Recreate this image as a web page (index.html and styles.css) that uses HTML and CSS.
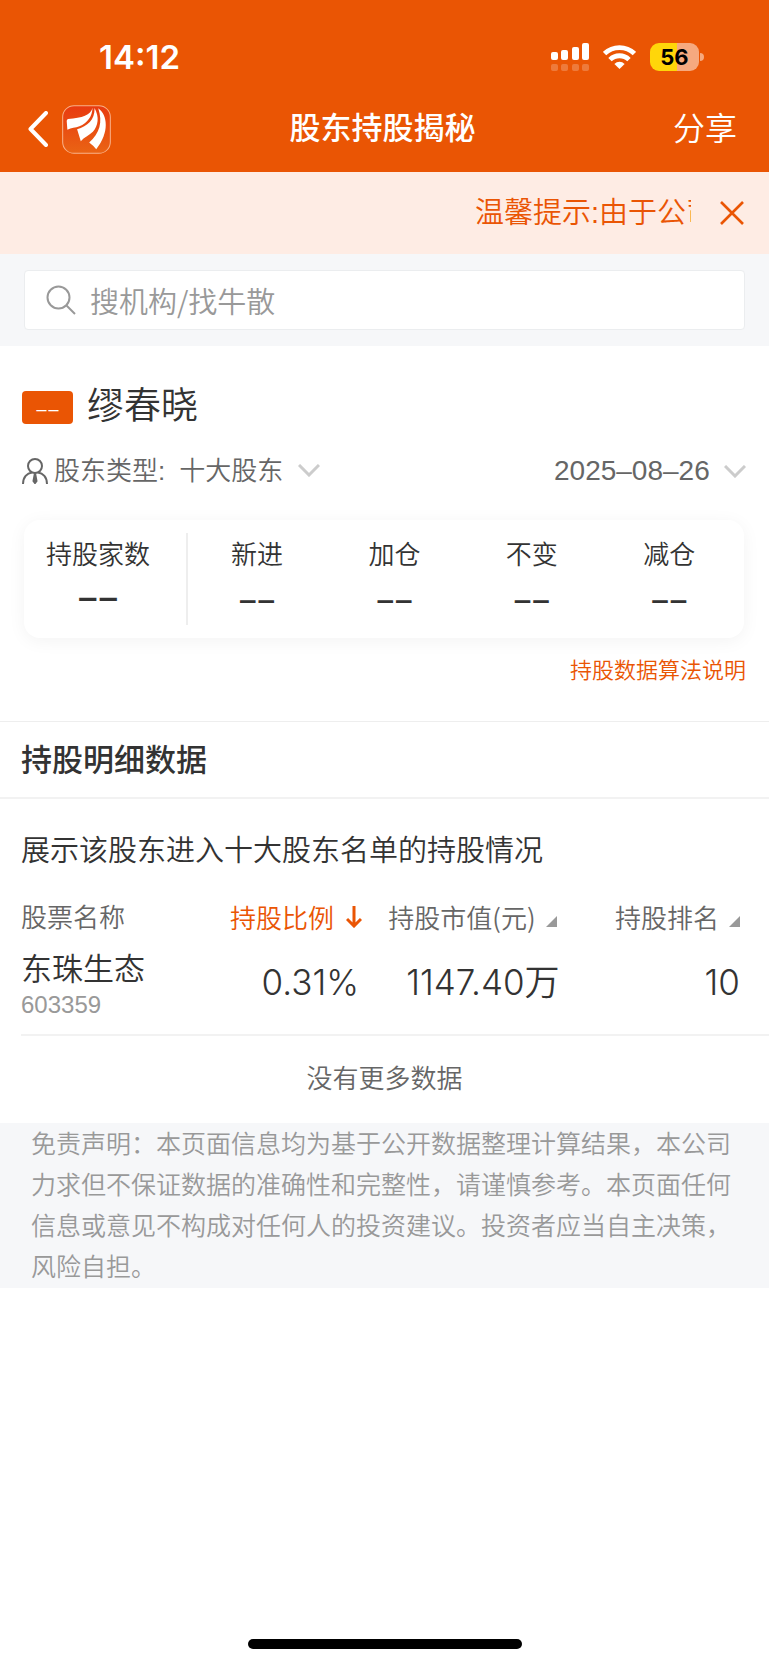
FILE: index.html
```html
<!DOCTYPE html>
<html lang="zh-CN">
<head>
  <meta charset="UTF-8">
  <meta name="viewport" content="width=device-width, initial-scale=1.0">
  <title>股东持股揭秘</title>
  <link rel="stylesheet" href="styles.css">
</head>
<body>

  <header class="top">
    <div class="status-bar">
      <span class="time">14:12</span>
      <div class="status-icons">
        <svg class="signal" width="38" height="28" viewBox="0 0 38 28" fill="#fff">
          <rect x="0" y="9" width="7" height="8" rx="2"/>
          <rect x="10" y="7" width="7" height="10" rx="2"/>
          <rect x="21" y="4" width="7" height="13" rx="2"/>
          <rect x="31" y="0" width="7" height="17" rx="2"/>
          <g opacity="0.22">
            <rect x="0" y="21" width="7" height="7" rx="2"/>
            <rect x="10" y="21" width="7" height="7" rx="2"/>
            <rect x="21" y="21" width="7" height="7" rx="2"/>
            <rect x="31" y="21" width="7" height="7" rx="2"/>
          </g>
        </svg>
        <svg class="wifi" width="33" height="24" viewBox="0 0 33 24">
          <g fill="none" stroke="#fff" stroke-width="4.8">
            <path d="M1.6 8.6 A21.5 21.5 0 0 1 31.4 8.6"/>
            <path d="M7 14.6 A13.6 13.6 0 0 1 26 14.6"/>
          </g>
          <path d="M11.4 18.9 A7.4 7.4 0 0 1 21.6 18.9 L16.5 24 Z" fill="#fff"/>
        </svg>
        <div class="battery"><span class="battery-level">56</span></div>
      </div>
    </div>

    <nav class="nav-bar">
      <div class="nav-left">
        <button class="icon-btn" type="button" aria-label="返回">
          <svg width="20" height="36" viewBox="0 0 20 36" fill="none" stroke="#fff" stroke-width="4" stroke-linecap="round" stroke-linejoin="round">
            <path d="M18 2 L2.5 18 L18 34"/>
          </svg>
        </button>
        <a class="logo" href="#" aria-label="首页">
          <svg width="49" height="49" viewBox="0 0 146 146">
            <defs>
              <linearGradient id="logoBg" x1="0" y1="0" x2="0" y2="1">
                <stop offset="0" stop-color="#e83a10"/>
                <stop offset="1" stop-color="#ea6414"/>
              </linearGradient>
            </defs>
            <rect x="2" y="2" width="142" height="142" rx="34" fill="url(#logoBg)" stroke="#f9b189" stroke-width="3"/>
            <g fill="#fff">
              <path d="M91 8 C86 30 60 38 18 42 Q14 43 14 48 L16 74 C28 66 40 68 52 63 C76 54 90 34 91 8 Z"/>
              <path d="M97 9 C98 44 76 64 45 72 Q50 88 56 108 C66 96 80 92 92 80 C108 62 112 36 97 9 Z"/>
              <path d="M108 10 C136 30 142 82 102 132 Q92 120 81 112 C112 84 122 52 108 10 Z"/>
            </g>
          </svg>
        </a>
      </div>
      <h1>股东持股揭秘</h1>
      <button class="share-btn" type="button">分享</button>
    </nav>
  </header>

  <div class="notice">
    <p class="notice-text">温馨提示:由于公司</p>
    <button class="icon-btn" type="button" aria-label="关闭">
      <svg width="24" height="24" viewBox="0 0 24 24" fill="none" stroke="#ea5504" stroke-width="2.6">
        <path d="M1 1 L23 23 M23 1 L1 23"/>
      </svg>
    </button>
  </div>

  <form class="search">
    <div class="search-box">
      <svg width="30" height="30" viewBox="0 0 30 30" fill="none" stroke="#999" stroke-width="2">
        <circle cx="12.5" cy="12.5" r="11"/>
        <path d="M20.5 20.5 L29 29"/>
      </svg>
      <input type="text" placeholder="搜机构/找牛散" aria-label="搜机构/找牛散">
    </div>
  </form>

  <main>
    <section class="holder">
      <div class="holder-name">
        <span class="badge">––</span>
        <h2>缪春晓</h2>
      </div>

      <div class="filters">
        <div class="filter">
          <svg class="person" width="26" height="26" viewBox="0 0 26 26" fill="none" stroke="#666" stroke-width="2">
            <circle cx="13" cy="8" r="7"/>
            <path d="M1 26 C1 19 5 15 10 14.5 M25 26 C25 19 21 15 16 14.5"/>
            <path d="M13 15 L14.5 23 L13 25 L11.5 23 Z" fill="#666"/>
          </svg>
          <label for="holderType">股东类型:</label>
          <select id="holderType">
            <option>十大股东</option>
          </select>
          <svg class="chevron" width="22" height="13" viewBox="0 0 22 13" fill="none" stroke="#ccc" stroke-width="3">
            <path d="M1 1 L11 11 L21 1"/>
          </svg>
        </div>
        <div class="filter">
          <select id="reportDate" aria-label="报告日期">
            <option>2025–08–26</option>
          </select>
          <svg class="chevron" width="22" height="13" viewBox="0 0 22 13" fill="none" stroke="#ccc" stroke-width="3">
            <path d="M1 1 L11 11 L21 1"/>
          </svg>
        </div>
      </div>

      <dl class="stats">
        <div class="stat total">
          <dt>持股家数</dt>
          <dd>––</dd>
        </div>
        <div class="stat">
          <dt>新进</dt>
          <dd>––</dd>
        </div>
        <div class="stat">
          <dt>加仓</dt>
          <dd>––</dd>
        </div>
        <div class="stat">
          <dt>不变</dt>
          <dd>––</dd>
        </div>
        <div class="stat">
          <dt>减仓</dt>
          <dd>––</dd>
        </div>
      </dl>

      <a class="explain" href="#">持股数据算法说明</a>
    </section>

    <section class="detail">
      <h3>持股明细数据</h3>
      <p class="detail-desc">展示该股东进入十大股东名单的持股情况</p>

      <table>
        <thead>
          <tr>
            <th class="col-name">股票名称</th>
            <th class="col-ratio">
              <button class="sort active" type="button">持股比例
                <svg width="16" height="22" viewBox="0 0 16 22" fill="none" stroke="#ea5504" stroke-width="3">
                  <path d="M8 0 V20 M1 13 L8 20 L15 13"/>
                </svg>
              </button>
            </th>
            <th class="col-value">
              <button class="sort" type="button">持股市值(元)
                <svg class="corner" width="11" height="11" viewBox="0 0 11 11" fill="#999"><path d="M11 0 V11 H0 Z"/></svg>
              </button>
            </th>
            <th class="col-rank">
              <button class="sort" type="button">持股排名
                <svg class="corner" width="11" height="11" viewBox="0 0 11 11" fill="#999"><path d="M11 0 V11 H0 Z"/></svg>
              </button>
            </th>
          </tr>
        </thead>
        <tbody>
          <tr>
            <td class="col-name">
              <a href="#">东珠生态</a>
              <span class="code">603359</span>
            </td>
            <td class="col-ratio">0.31%</td>
            <td class="col-value">1147.40万</td>
            <td class="col-rank">10</td>
          </tr>
        </tbody>
      </table>

      <p class="no-more">没有更多数据</p>
    </section>

    <p class="disclaimer">免责声明：本页面信息均为基于公开数据整理计算结果，本公司力求但不保证数据的准确性和完整性，请谨慎参考。本页面任何信息或意见不构成对任何人的投资建议。投资者应当自主决策，风险自担。</p>
  </main>

  <div class="home-indicator"></div>

</body>
</html>
```
FILE: styles.css
```css
/* Reset */
body, h1, h2, h3, p, dl, dd, button, input, select {
    margin: 0;
    padding: 0;
}

* {
    box-sizing: border-box;
}

body {
    display: flex;
    flex-direction: column;
    min-height: 100vh;
    background-color: #ffffff;
    color: #333333;
    font-family: "Liberation Sans", "Noto Sans CJK SC", sans-serif;
    font-size: 26px;
    font-weight: 350;
    line-height: 1.4;
    overflow-x: hidden;
}

button, input, select {
    border: none;
    background: none;
    font: inherit;
    color: inherit;
}

button {
    cursor: pointer;
}

a {
    color: inherit;
    text-decoration: none;
}

svg {
    display: block;
    flex-shrink: 0;
}

/* Header */
.top {
    background-color: #ea5504;
    color: #ffffff;
}

.status-bar {
    display: flex;
    justify-content: space-between;
    align-items: center;
    height: 86px;
    padding: 28px 65px 0 99px;
}

.time {
    font-family: Inter, sans-serif;
    font-size: 33px;
    font-weight: 600;
}

.status-icons {
    display: flex;
    align-items: center;
    gap: 14px;
}

.battery {
    position: relative;
    width: 49px;
    height: 28px;
    margin-right: 5px;
    border-radius: 9px;
    background: linear-gradient(to right, #ffd60a 56%, #f6a97f 56%);
    color: #000000;
    text-align: center;
}

.battery::after {
    content: "";
    position: absolute;
    left: 50px;
    top: 10px;
    width: 4px;
    height: 8px;
    border-radius: 0 4px 4px 0;
    background-color: #f6a97f;
}

.battery-level {
    display: block;
    font-family: Inter, sans-serif;
    font-size: 22px;
    font-weight: 700;
    line-height: 28px;
}

.nav-bar {
    display: grid;
    grid-template-columns: 1fr auto 1fr;
    align-items: center;
    height: 86px;
    padding: 0 32px 0 28px;
}

.nav-left {
    display: flex;
    align-items: center;
    gap: 14px;
}

.nav-bar h1 {
    font-size: 31px;
    font-weight: 500;
}

.share-btn {
    justify-self: end;
    font-size: 32px;
}

/* Notice */
.notice {
    display: flex;
    justify-content: flex-end;
    align-items: center;
    gap: 29px;
    height: 82px;
    padding: 0 25px;
    background-color: #feece4;
    color: #ea5504;
}

.notice-text {
    width: 216px;
    overflow: hidden;
    white-space: nowrap;
    font-size: 29px;
    line-height: 40px;
}

/* Search */
.search {
    padding: 16px 24px;
    background-color: #f6f7f9;
}

.search-box {
    display: flex;
    align-items: center;
    gap: 14px;
    height: 60px;
    padding: 0 21px;
    border: 1px solid #ebedef;
    border-radius: 4px;
    background-color: #ffffff;
}

.search-box input {
    flex: 1;
    min-width: 0;
    font-family: "Noto Sans CJK SC", sans-serif;
    font-size: 29px;
    outline: none;
}

.search-box input::placeholder {
    color: #999999;
    opacity: 1;
}

/* Holder */
.holder {
    padding: 33px 23px 33px 22px;
}

.holder-name {
    display: flex;
    align-items: center;
    gap: 14px;
    height: 56px;
}

.holder-name h2 {
    font-size: 37px;
    font-weight: 350;
}

.badge {
    width: 51px;
    border-radius: 4px;
    background-color: #ea5504;
    color: #ffffff;
    font-family: "Noto Sans", sans-serif;
    font-size: 24px;
    line-height: 33px;
    text-align: center;
}

.filters {
    display: flex;
    justify-content: space-between;
    align-items: center;
    height: 72px;
    color: #666666;
}

.filter {
    display: flex;
    align-items: center;
}

.filter label {
    margin: 0 14px 0 6px;
}

.filter select {
    appearance: none;
}

#reportDate {
    font-size: 28px;
}

.chevron {
    margin-left: 14px;
}

.stats {
    display: flex;
    align-items: center;
    height: 118px;
    margin: 13px 2px 0;
    padding-right: 6px;
    border-radius: 16px;
    box-shadow: 0 3px 18px rgba(0, 0, 0, 0.05);
}

.stat {
    flex: 1;
    height: 92px;
    text-align: center;
}

.stat.total {
    flex: 0 0 23%;
    padding-right: 14px;
    border-right: 2px solid #eeeeee;
}

.stat dt {
    line-height: 44px;
}

/* the en dash of Noto Sans keeps a gap between two dashes */
.stat dd {
    font-family: "Noto Sans", sans-serif;
    font-size: 37px;
    font-weight: 400;
    line-height: 40px;
}

.stat.total dd {
    font-size: 41px;
    line-height: 36px;
}

.explain {
    display: block;
    margin-top: 16px;
    color: #ea5504;
    font-size: 22px;
    line-height: 34px;
    text-align: right;
}

/* Detail */
.detail h3 {
    padding: 2px 21px 0;
    border-top: 1px solid #eeeeee;
    border-bottom: 2px solid #f2f2f2;
    font-size: 31px;
    font-weight: 500;
    line-height: 73px;
}

.detail-desc {
    padding: 30px 21px 21px;
    font-size: 29px;
    line-height: 44px;
}

table {
    width: calc(100% - 21px);
    margin-left: 21px;
    border-collapse: collapse;
    table-layout: fixed;
}

th, td {
    padding: 0;
    font-weight: 350;
    text-align: right;
    white-space: nowrap;
}

th {
    height: 48px;
    color: #666666;
}

td {
    height: 93px;
    padding-bottom: 12px;
    border-bottom: 2px solid #f2f2f2;
    font-family: Inter, "Noto Sans CJK SC", sans-serif;
    font-size: 35px;
}

.col-name {
    width: 19%;
    text-align: left;
}

.col-ratio {
    width: 27%;
    padding-right: 3px;
}

.col-value {
    width: 26%;
}

.col-rank {
    padding-right: 29px;
}

th.col-value {
    padding-right: 3px;
}

td.col-ratio {
    padding-right: 6px;
}

td.col-name {
    padding-bottom: 6px;
    font-size: 31px;
}

td a {
    display: block;
    line-height: 40px;
}

.code {
    display: block;
    color: #999999;
    font-family: "Liberation Sans", sans-serif;
    font-size: 24px;
    line-height: 32px;
}

.sort {
    display: inline-flex;
    align-items: center;
    gap: 10px;
    font-family: "Noto Sans CJK SC", sans-serif;
}

.sort.active {
    gap: 12px;
    color: #ea5504;
}

.corner {
    align-self: flex-end;
    margin-bottom: 8px;
}

.no-more {
    color: #666666;
    line-height: 87px;
    text-align: center;
}

.disclaimer {
    padding: 1px 31px 0;
    background-color: #f6f7f9;
    color: #999999;
    font-size: 25px;
    line-height: 41px;
}

.home-indicator {
    width: 274px;
    height: 10px;
    margin: auto auto 16px;
    border-radius: 5px;
    background-color: #000000;
}
```
